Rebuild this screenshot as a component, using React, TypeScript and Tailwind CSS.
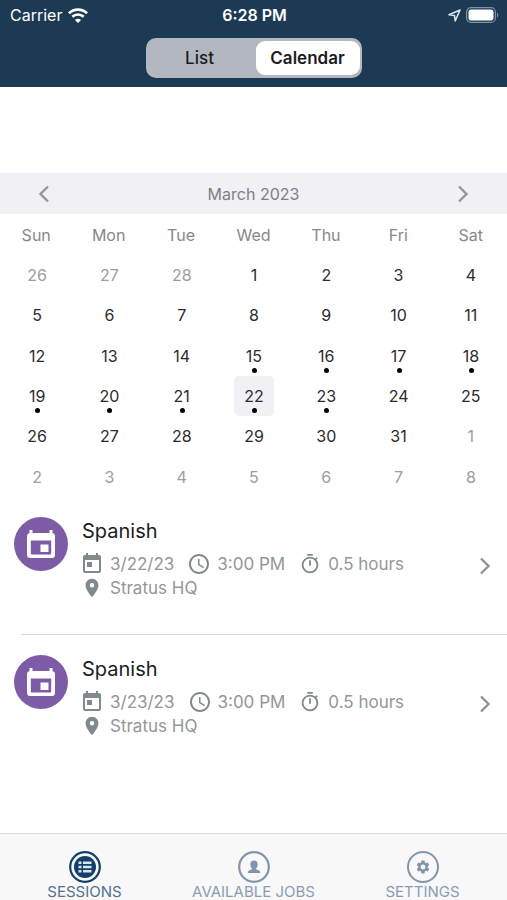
import React, {useState} from "react";
import {MdAccessTime, MdOutlineTimer, MdPlace, MdSettings, MdToday} from "react-icons/md";

const weekdays = ["Sun", "Mon", "Tue", "Wed", "Thu", "Fri", "Sat"];

const sessions = [
    {id: 1, title: "Spanish", date: "3/22/23", time: "3:00 PM", length: "0.5 hours", place: "Stratus HQ"},
    {id: 2, title: "Spanish", date: "3/23/23", time: "3:00 PM", length: "0.5 hours", place: "Stratus HQ"},
];

// March 2023 starts on a Wednesday, the grid always shows six weeks
const days = Array.from({length: 42}, (_, i) => {
    const d = new Date(2023, 1, 26 + i);
    return {
        key: i,
        day: d.getDate(),
        inMonth: d.getMonth() === 2,
        marked: d.getMonth() === 2 && d.getDate() >= 15 && d.getDate() <= 23,
    };
});

function Chevron({left = false}: {left?: boolean}) {
    return (
        <svg width="12" height="18" viewBox="0 0 12 18" fill="none" stroke="currentColor" strokeWidth="2.4" aria-hidden="true">
            <path d={left ? "M10 1.5 2.5 9l7.5 7.5" : "M2 1.5 9.5 9 2 16.5"}/>
        </svg>
    );
}

function StatusBar() {
    return (
        <div className="grid grid-cols-3 items-center h-[30px] pl-[10px] pr-2 text-white text-base">
            <div className="flex items-center gap-[6px]">
                <span>Carrier</span>
                <svg width="20" height="15" viewBox="0 0 20 15" fill="none" stroke="white" strokeWidth="2.7" aria-hidden="true">
                    <path d="M1 5.3C6 .4 14 .4 19 5.3"/>
                    <path d="M4.3 8.8c3.3-3.1 8.1-3.1 11.4 0"/>
                    <path d="M10 15 6.9 11.9c1.7-1.6 4.5-1.6 6.2 0z" fill="white" stroke="none"/>
                </svg>
            </div>
            <div className="text-center font-semibold">6:28 PM</div>
            <div className="flex items-center justify-end gap-[5px]">
                <svg width="13" height="13" viewBox="0 0 13 13" fill="none" stroke="#dbe4ec" strokeWidth="1.6" strokeLinejoin="round" aria-hidden="true">
                    <path d="M12 1 1 5.8l5.5.7.7 5.5z"/>
                </svg>
                <svg width="33" height="16" viewBox="0 0 33 16" fill="none" aria-hidden="true">
                    <rect x=".6" y=".6" width="28.8" height="14.8" rx="4.5" stroke="#8093a5" strokeWidth="1.2"/>
                    <rect x="2.5" y="2.5" width="25" height="11" rx="2.8" fill="white"/>
                    <path d="M31 5.5c1.7.7 1.7 4.3 0 5z" fill="#8093a5"/>
                </svg>
            </div>
        </div>
    );
}

function SessionRow({session}: {session: any}) {
    return (
        <a href="#session" className="flex pl-[14px]">
            <span className="flex items-center justify-center size-[54px] mt-5 rounded-full bg-[#7e5ba6] text-white shrink-0">
                <svg width="28" height="28" viewBox="0 0 28 28" fill="currentColor" aria-hidden="true">
                    <path fillRule="evenodd" d="M2.5 0h3v3h17V0h3v3a3 3 0 0 1 2.5 3v19a3 3 0 0 1-3 3H3a3 3 0 0 1-3-3V6a3 3 0 0 1 2.5-3zM3.8 10.5v13a1 1 0 0 0 1 1h18.4a1 1 0 0 0 1-1v-13z"/>
                    <rect x="13.5" y="14.5" width="8" height="7.5"/>
                </svg>
            </span>
            <div className="flex flex-1 items-start justify-between pt-5 pb-[34px] pl-[14px] pr-4">
                <div>
                    <h2 className="text-xl leading-7 text-[#1c1c1e]">{session.title}</h2>
                    <div className="mt-[7px] -ml-[2px] text-[17px] leading-6 text-[#939798]">
                        <div className="flex gap-[13px]">
                            <span className="flex items-center gap-[6px]">
                                <MdToday size={24} className="text-[#7f8a8c]"/>{session.date}
                            </span>
                            <span className="flex items-center gap-[6px]">
                                <MdAccessTime size={24} className="text-[#7f8a8c]"/>{session.time}
                            </span>
                            <span className="flex items-center gap-[6px]">
                                <MdOutlineTimer size={24} className="p-px text-[#7f8a8c]"/>{session.length}
                            </span>
                        </div>
                        <div className="flex items-center gap-[6px]">
                            <MdPlace size={24} className="p-px text-[#7f8a8c]"/>{session.place}
                        </div>
                    </div>
                </div>
                <span className="mt-10 text-[#8f9496]"><Chevron/></span>
            </div>
        </a>
    );
}

export default function App() {
    const [view, setView] = useState("Calendar");
    const [selected, setSelected] = useState(24);

    return (
        <div className="flex flex-col h-screen overflow-hidden bg-white font-['Inter','Liberation_Sans',sans-serif]">
            <header className="bg-[#1c3a54] pb-[9px]">
                <StatusBar/>
                <div className="grid grid-cols-2 gap-1 w-[216px] h-10 mt-2 mx-auto px-[2px] py-[3px] rounded-[10px] bg-[#b3b8c0]">
                    {["List", "Calendar"].map((name) => (
                        <button
                            key={name}
                            onClick={() => setView(name)}
                            className={`rounded-[9px] text-[17px] leading-[26px] text-[#1c1c1e] ${view === name ? "bg-white font-semibold" : "font-medium"}`}
                        >
                            {name}
                        </button>
                    ))}
                </div>
            </header>

            <main className="flex-1 min-h-0 pt-[86px]">
                <div className="flex items-center justify-between h-[41px] px-[38px] bg-[#f0f0f5] text-[#949799]">
                    <button aria-label="Previous month"><Chevron left/></button>
                    <h1 className="text-base text-[#7f8082]">March 2023</h1>
                    <button aria-label="Next month"><Chevron/></button>
                </div>
                <div className="grid grid-cols-7 items-center h-[41px] text-center text-base text-[#87888a]">
                    {weekdays.map((w) => <span key={w}>{w}</span>)}
                </div>
                <div className="grid grid-cols-7 grid-rows-6 h-[242px] pl-px justify-items-center">
                    {days.map((d) => (
                        <button
                            key={d.key}
                            onClick={() => setSelected(d.key)}
                            className={`relative w-10 rounded-[5px] text-base ${d.inMonth ? "text-[#2c2c2e]" : "text-[#9c9d9f]"} ${selected === d.key ? "bg-[#f0f0f5]" : ""}`}
                        >
                            {d.day}
                            {d.marked && <span className="absolute bottom-[3px] left-[18px] size-[5px] rounded-full bg-black"/>}
                        </button>
                    ))}
                </div>

                <ul>
                    {sessions.map((s, i) => (
                        <li key={s.id}>
                            <SessionRow session={s}/>
                            {i < sessions.length - 1 && <div className="ml-[21px] h-px bg-[#d9d9dc]"/>}
                        </li>
                    ))}
                </ul>
            </main>

            <nav className="grid grid-cols-3 shrink-0 pt-[17px] border-t border-[#dcdddf] bg-[#f8f8f8] text-[15px] leading-4 text-[#8a9db3]">
                <a href="#sessions" className="flex flex-col items-center gap-px text-[#123f69]">
                    <svg width="32" height="32" viewBox="0 0 32 32" fill="none" aria-hidden="true">
                        <circle cx="16" cy="16" r="14.8" stroke="currentColor" strokeWidth="2.2"/>
                        <circle cx="16" cy="16" r="11" fill="currentColor"/>
                        <path d="M9.5 10.5h3V13h-3zM14 10.5h8.5V13H14zM9.5 14.8h3v2.5h-3zM14 14.8h8.5v2.5H14zM9.5 19h3v2.5h-3zM14 19h8.5v2.5H14z" fill="#dbe5ee"/>
                    </svg>
                    <span className="text-[#52708f]">SESSIONS</span>
                </a>
                <a href="#jobs" className="flex flex-col items-center gap-px">
                    <svg width="32" height="32" viewBox="0 0 32 32" fill="none" className="text-[#8095ac]" aria-hidden="true">
                        <circle cx="16" cy="16" r="14.8" stroke="currentColor" strokeWidth="2.2"/>
                        <path d="M16 9.500c2.300 0 3.700 1.600 3.700 3.900 0 1.700-.7 3.200-1.700 4 .1 1 .7 1.300 1.800 1.600 1.500.4 2.400 1.100 2.400 3H9.800c0-1.900.9-2.600 2.400-3 1.100-.3 1.700-.6 1.800-1.600-1-.8-1.700-2.300-1.700-4 0-2.300 1.400-3.900 3.700-3.900z" fill="currentColor"/>
                    </svg>
                    <span>AVAILABLE JOBS</span>
                </a>
                <a href="#settings" className="flex flex-col items-center gap-px">
                    <span className="flex items-center justify-center size-8 rounded-full border-2 text-[#8095ac]"><MdSettings size={16}/></span>
                    <span>SETTINGS</span>
                </a>
            </nav>
        </div>
    );
}
